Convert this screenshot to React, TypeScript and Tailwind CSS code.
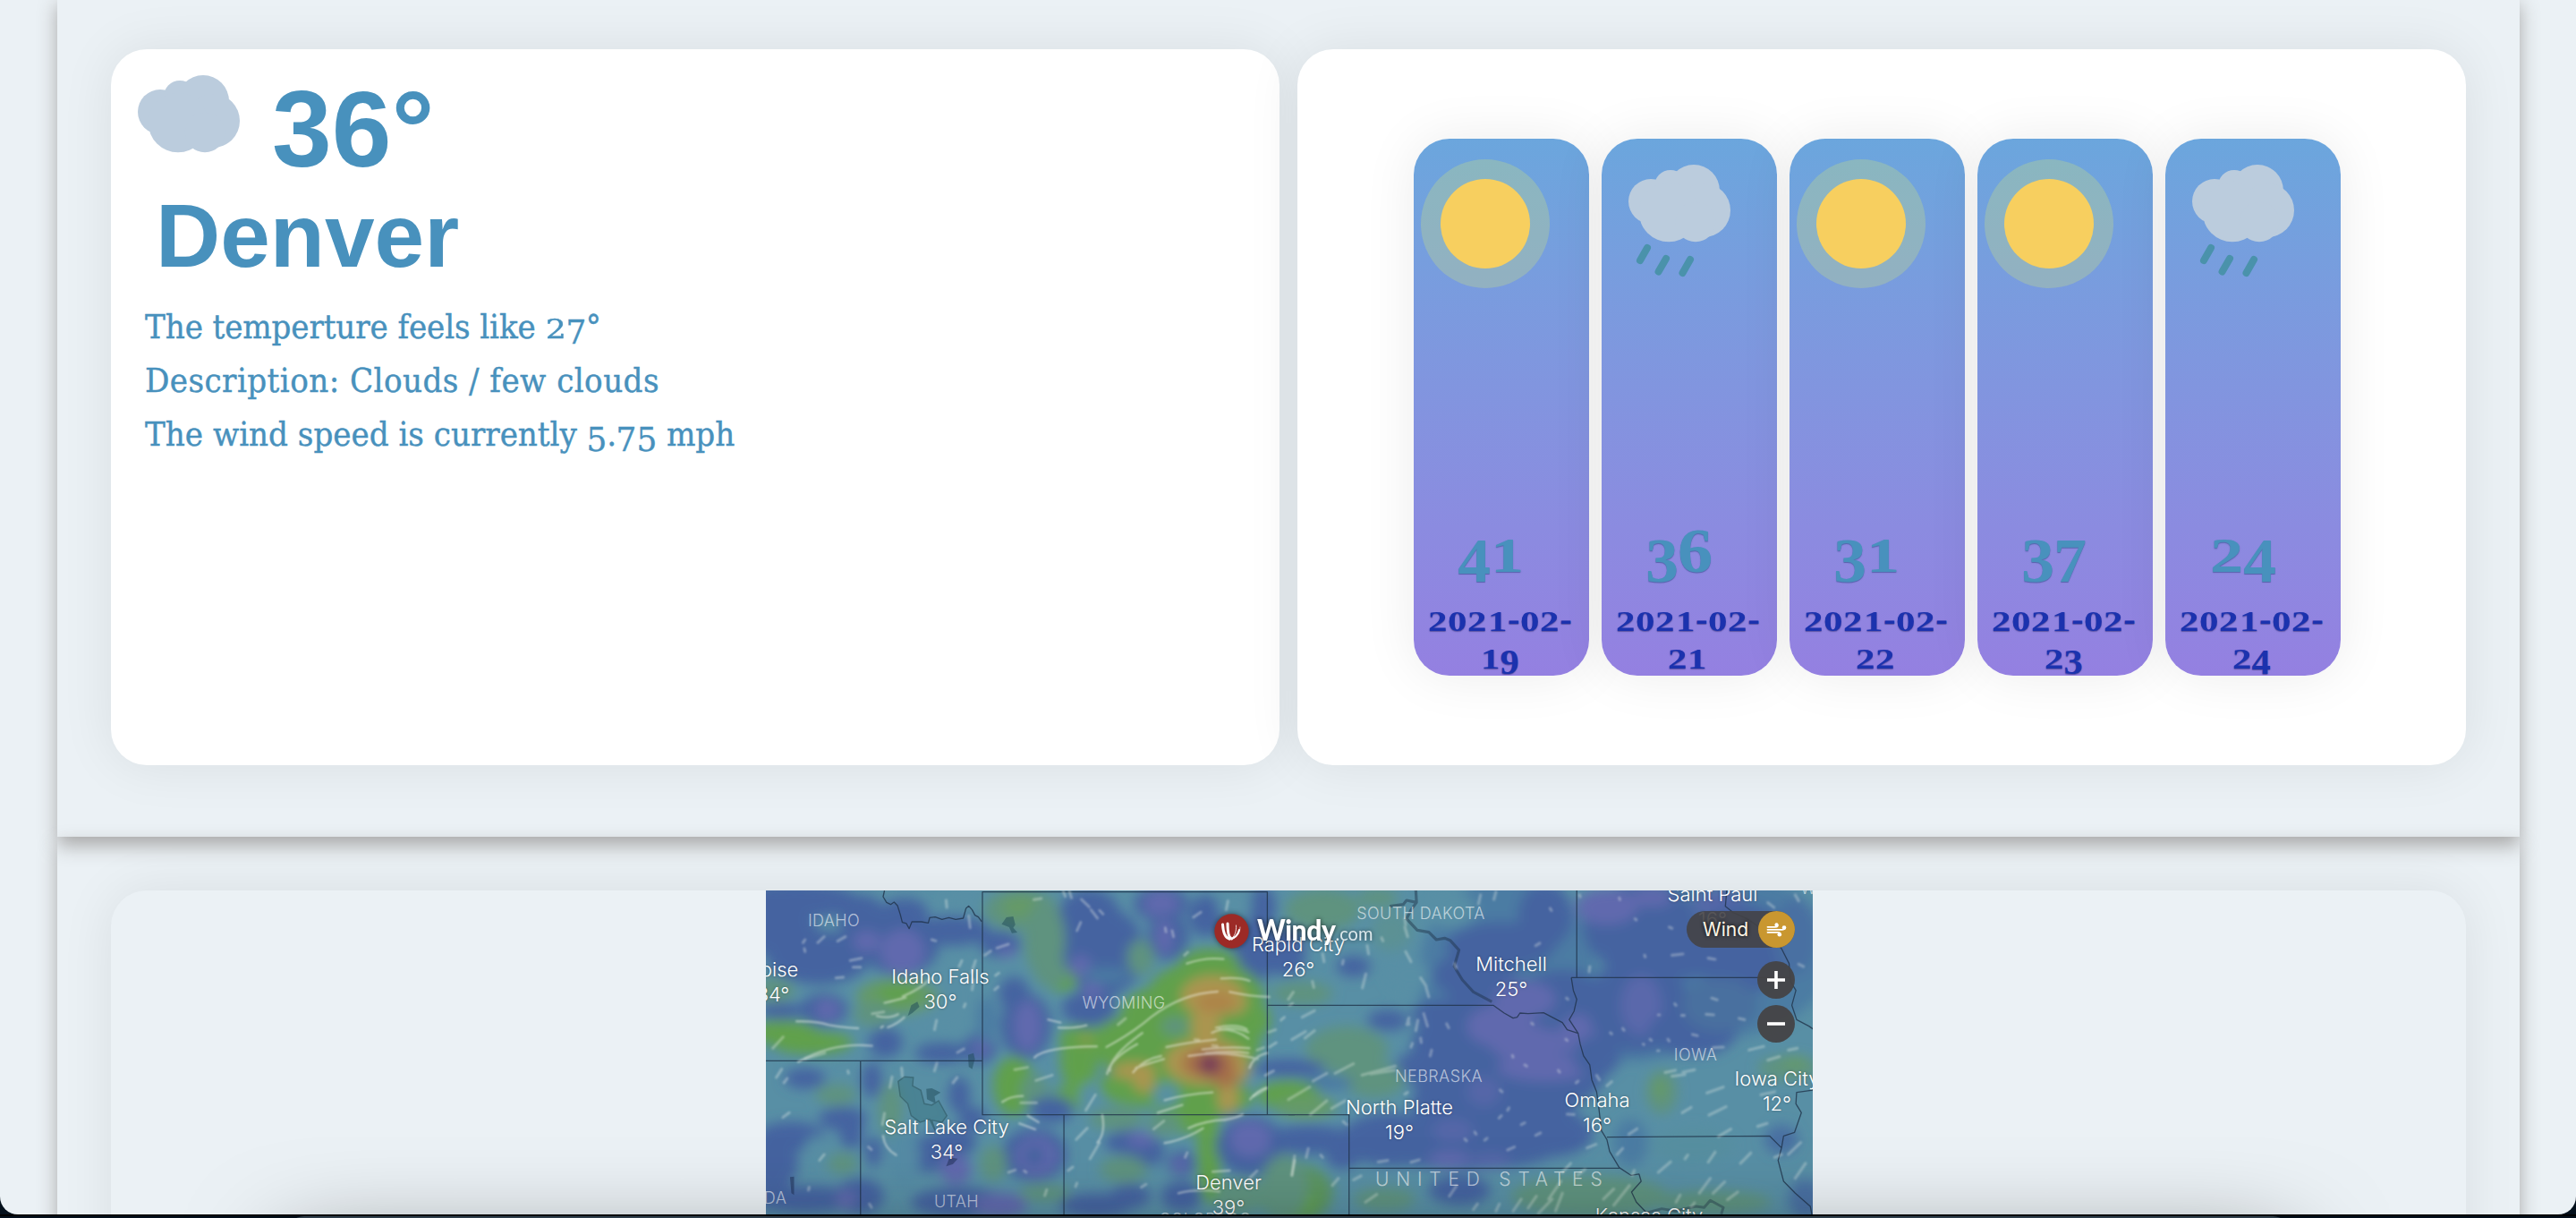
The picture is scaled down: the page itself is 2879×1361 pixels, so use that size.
import React from "react";

type Blob = [number, number, number, number, string];
type Streak = [number, number, number, number];

const TEAL = "#588fa5";
const BLUE = "#4563a0";
const PURP = "#6069ae";
const OLIVE = "#5f937f";
const GREEN = "#60a04c";
const ORANGE = "#ab9550";
const RUST = "#a6704a";
const PLUM = "#783d57";
const MIST = "#4c7ba3";

const westBlobs: Blob[] = [
  [100, 80, 190, 60, BLUE], [60, 190, 110, 80, BLUE], [170, 270, 150, 90, BLUE], [300, 150, 70, 90, BLUE],
  [420, 120, 70, 50, BLUE], [410, 240, 110, 90, BLUE], [560, 180, 110, 50, BLUE], [415, 250, 65, 75, PURP],
  [310, 215, 40, 35, PURP], [600, 80, 60, 30, TEAL], [40, 380, 60, 40, OLIVE], [60, 450, 70, 28, BLUE],
  [185, 445, 70, 55, BLUE], [195, 445, 35, 35, PURP], [365, 555, 50, 50, BLUE], [530, 590, 80, 35, BLUE],
  [640, 575, 50, 50, BLUE], [645, 572, 25, 25, PURP], [540, 400, 90, 120, TEAL],
  [700, 225, 60, 45, BLUE], [720, 250, 25, 20, PURP], [740, 390, 45, 55, BLUE], [775, 500, 75, 110, BLUE],
  [780, 500, 40, 85, PURP], [660, 480, 30, 80, MIST], [960, 130, 90, 90, BLUE], [1000, 250, 120, 150, BLUE],
  [960, 440, 80, 60, BLUE], [935, 300, 30, 40, PURP], [970, 380, 30, 30, PURP], [1010, 330, 70, 30, "#4a78a2"],
  [1170, 90, 80, 60, BLUE], [1170, 90, 50, 45, PURP], [1190, 200, 60, 80, BLUE], [1180, 200, 25, 60, PURP],
  [1300, 130, 50, 70, BLUE], [1440, 250, 60, 110, BLUE], [1465, 100, 40, 70, BLUE], [1385, 90, 50, 60, TEAL],
  [1520, 250, 50, 80, BLUE],
  [760, 110, 110, 70, OLIVE], [760, 100, 60, 40, "#659a68"], [830, 210, 60, 130, OLIVE], [880, 350, 45, 35, GREEN],
  [850, 320, 50, 50, OLIVE], [1110, 270, 40, 60, OLIVE], [400, 400, 120, 60, "#659a68"], [400, 390, 60, 30, GREEN],
  [330, 460, 60, 40, OLIVE], [60, 520, 110, 40, GREEN], [150, 555, 120, 40, GREEN],
  [740, 700, 60, 100, GREEN], [800, 720, 40, 60, OLIVE], [930, 610, 55, 110, GREEN], [940, 540, 70, 40, GREEN],
  [1060, 560, 90, 90, GREEN], [1160, 460, 110, 90, GREEN], [1300, 400, 170, 120, GREEN], [1310, 290, 90, 50, GREEN],
  [1280, 560, 180, 140, GREEN], [1420, 480, 70, 70, GREEN], [1120, 700, 130, 70, GREEN], [1290, 740, 150, 60, GREEN],
  [1240, 810, 100, 50, GREEN], [1310, 930, 35, 170, GREEN], [1040, 810, 80, 40, OLIVE], [910, 740, 60, 40, GREEN],
  [1210, 500, 40, 30, OLIVE], [1185, 730, 38, 40, TEAL], [960, 740, 30, 50, TEAL],
  [1320, 400, 92, 70, ORANGE], [1380, 420, 40, 40, ORANGE], [1300, 500, 42, 60, ORANGE], [1300, 620, 120, 78, ORANGE],
  [1380, 650, 48, 44, ORANGE], [1365, 740, 30, 55, ORANGE], [1090, 650, 65, 28, ORANGE], [1120, 690, 30, 32, ORANGE],
  [1330, 420, 60, 35, "#ad8448"], [1310, 625, 80, 50, RUST], [1355, 670, 40, 35, RUST], [1312, 628, 34, 36, PLUM],
  [950, 545, 20, 8, ORANGE],
  [130, 675, 60, 35, BLUE], [325, 680, 30, 60, BLUE], [90, 870, 100, 50, BLUE], [30, 960, 80, 90, BLUE],
  [240, 810, 70, 40, BLUE], [265, 860, 35, 50, BLUE], [130, 1080, 160, 45, BLUE], [290, 1070, 70, 60, BLUE],
  [330, 920, 25, 50, BLUE], [480, 930, 100, 60, BLUE], [560, 890, 70, 50, BLUE], [570, 980, 45, 50, PURP],
  [580, 1090, 140, 50, BLUE], [700, 1100, 80, 40, PURP], [580, 730, 32, 60, BLUE], [620, 810, 40, 40, BLUE],
  [800, 930, 95, 90, BLUE], [805, 935, 60, 65, PURP], [800, 935, 30, 35, BLUE], [850, 780, 65, 45, BLUE],
  [1080, 890, 75, 42, BLUE], [1130, 920, 50, 50, BLUE], [1110, 880, 40, 25, PURP], [1230, 960, 42, 42, BLUE],
  [1225, 965, 22, 25, PURP], [1430, 900, 100, 100, BLUE], [1430, 880, 60, 60, PURP], [980, 1100, 110, 40, BLUE],
  [1080, 1070, 60, 40, BLUE], [1230, 1070, 60, 50, BLUE], [250, 1080, 30, 30, PURP],
  [380, 780, 35, 90, OLIVE], [420, 940, 45, 110, "#558ba5"], [240, 960, 45, 35, OLIVE], [220, 730, 60, 35, OLIVE],
  [680, 960, 40, 60, OLIVE], [830, 1060, 75, 30, OLIVE], [1060, 980, 70, 45, OLIVE], [1180, 830, 50, 40, OLIVE],
  [1400, 1070, 70, 60, OLIVE], [1530, 1040, 70, 110, OLIVE], [170, 900, 40, 30, TEAL],
];

const eastBlobs: Blob[] = [
  [640, 330, 260, 330, MIST], [1250, 260, 340, 280, MIST], [1000, 500, 200, 120, MIST],
  [100, 110, 110, 70, OLIVE], [260, 70, 60, 30, OLIVE], [40, 390, 90, 40, OLIVE], [300, 180, 60, 70, "#5b9194"],
  [190, 300, 50, 35, BLUE], [10, 250, 40, 80, BLUE], [350, 330, 60, 60, TEAL], [470, 110, 80, 60, TEAL],
  [750, 130, 80, 110, BLUE], [620, 230, 160, 80, BLUE], [540, 330, 120, 80, BLUE], [800, 400, 120, 90, BLUE],
  [650, 420, 190, 80, BLUE], [590, 560, 230, 140, BLUE], [600, 760, 240, 160, BLUE], [520, 920, 260, 60, BLUE],
  [300, 880, 150, 90, BLUE], [780, 640, 150, 130, BLUE], [760, 860, 130, 80, BLUE], [400, 640, 90, 60, BLUE],
  [290, 480, 60, 35, BLUE], [440, 460, 80, 50, BLUE],
  [690, 410, 90, 60, PURP], [620, 500, 100, 70, PURP], [700, 560, 110, 60, PURP], [750, 640, 140, 45, PURP],
  [850, 530, 60, 70, PURP], [570, 720, 50, 50, "#5566a8"], [480, 850, 60, 40, "#5566a8"], [470, 945, 60, 25, PURP],
  [590, 950, 60, 25, "#5566a8"],
  [1030, 170, 170, 150, BLUE], [930, 100, 90, 60, PURP], [1060, 70, 60, 30, PURP], [1260, 90, 80, 45, "#5566a8"],
  [1160, 250, 120, 90, BLUE], [1330, 240, 150, 150, BLUE], [1020, 430, 150, 160, BLUE], [1030, 430, 60, 100, "#5a67ab"],
  [1180, 520, 130, 80, BLUE], [1260, 430, 110, 90, "#49709f"], [1480, 200, 60, 130, "#4a6fa2"], [900, 600, 70, 70, BLUE],
  [1090, 720, 45, 75, OLIVE], [1085, 710, 22, 35, "#659a68"], [1460, 640, 90, 40, OLIVE], [1480, 620, 40, 20, "#659a68"],
  [880, 1070, 230, 70, OLIVE], [1240, 1090, 170, 40, OLIVE], [1180, 900, 120, 60, "#578fa0"], [1440, 880, 50, 50, "#4a70a2"],
  [1510, 1080, 50, 70, "#4a70a2"], [1000, 890, 50, 80, MIST], [500, 1050, 90, 50, BLUE],
  [170, 580, 120, 80, OLIVE], [250, 680, 90, 60, OLIVE], [0, 640, 110, 30, BLUE], [110, 690, 80, 22, "#4a77a2"],
  [0, 730, 90, 50, GREEN], [50, 770, 90, 40, "#659a68"], [60, 880, 130, 50, BLUE], [160, 940, 50, 40, BLUE],
  [20, 1060, 110, 100, "#5c9560"], [20, 1090, 60, 50, GREEN], [280, 1080, 90, 40, OLIVE], [240, 1000, 60, 30, TEAL],
];

const westStreaks: Streak[] = [
  [130, 210, 124, 220], [167, 220, 186, 200], [225, 215, 248, 200], [128, 240, 130, 250], [262, 280, 295, 272],
  [270, 302, 292, 302], [220, 338, 242, 336], [542, 78, 544, 102], [608, 130, 612, 170], [500, 210, 512, 214],
  [580, 300, 588, 280], [616, 320, 628, 280], [655, 262, 672, 248], [690, 238, 724, 225], [798, 76, 820, 72],
  [890, 65, 884, 48], [908, 70, 902, 48], [937, 75, 960, 100], [965, 110, 984, 138], [990, 112, 1000, 124],
  [924, 180, 935, 152], [1182, 170, 1184, 184], [1202, 180, 1206, 200], [1264, 135, 1286, 118], [1365, 80, 1360, 110],
  [1238, 262, 1248, 252], [326, 458, 360, 452], [686, 330, 696, 322], [684, 378, 694, 368], [622, 345, 618, 378],
  [598, 425, 594, 436], [36, 574, 66, 536], [508, 512, 514, 480], [575, 588, 594, 576], [46, 672, 62, 644],
  [68, 690, 78, 675], [130, 610, 188, 590], [412, 640, 414, 668], [384, 670, 378, 706], [515, 624, 508, 650],
  [562, 690, 574, 672], [742, 646, 780, 638], [804, 682, 852, 664], [760, 757, 806, 757], [65, 806, 84, 790],
  [356, 830, 362, 792], [172, 950, 186, 930], [315, 905, 324, 914], [318, 1096, 324, 1108], [922, 880, 954, 842],
  [950, 782, 978, 730], [962, 945, 990, 890], [898, 984, 912, 972], [1044, 495, 1066, 474], [1148, 845, 1178, 818],
  [920, 1038, 924, 1026], [830, 1068, 836, 1048], [140, 1050, 142, 1040], [1112, 1040, 1126, 1030],
  [1240, 940, 1246, 924], [1552, 1000, 1560, 950], [1428, 1010, 1450, 985], [1484, 520, 1504, 512], [1486, 570, 1506, 555],
  [1520, 480, 1530, 470], [1474, 665, 1498, 650], [1440, 735, 1476, 710], [1268, 545, 1280, 546], [1320, 565, 1334, 566],
  [1450, 580, 1470, 572], [1545, 430, 1554, 424], [770, 985, 776, 990], [724, 990, 744, 982], [255, 650, 257, 658],
];

const westArcs: string[] = [
  "M362 422 Q400 412 424 404", "M340 466 Q380 476 402 460", "M372 504 Q400 492 420 470", "M415 400 Q470 375 495 340",
  "M105 484 Q160 482 200 496 Q250 506 285 507", "M110 620 Q200 560 300 564 L326 566", "M352 505 L358 500",
  "M1245 290 Q1300 268 1352 275", "M1010 570 Q1090 520 1140 470 Q1230 390 1335 384", "M1345 340 Q1400 335 1428 348",
  "M1370 385 Q1430 400 1486 402", "M1020 650 Q1020 600 1115 523", "M1012 660 Q1020 610 1100 560",
  "M1088 655 Q1120 610 1170 600", "M1096 640 Q1140 622 1178 610", "M1185 570 Q1260 552 1330 545",
  "M1318 522 Q1370 495 1425 520", "M1340 510 Q1390 510 1425 542", "M1330 505 Q1390 490 1420 510", "M1290 578 Q1370 568 1428 574",
  "M1250 600 Q1350 580 1452 610", "M1300 590 Q1370 582 1425 590", "M800 605 Q830 570 982 568", "M840 478 L876 488",
  "M870 505 Q920 508 952 497", "M706 754 Q730 734 766 734", "M358 868 Q362 910 396 932", "M780 800 L812 822",
  "M756 826 L802 846", "M1180 748 Q1240 728 1320 722", "M1160 790 L1232 764", "M1250 842 Q1300 816 1356 814",
  "M1180 892 Q1240 880 1292 842", "M1356 814 Q1390 808 1408 796", "M984 890 Q1008 860 998 798", "M1320 988 L1370 984",
  "M1220 1060 Q1270 1045 1340 1054", "M1430 745 Q1450 715 1478 706", "M1428 640 Q1440 600 1480 590",
];

const eastStreaks: Streak[] = [
  [555, 90, 561, 60], [600, 75, 606, 50], [340, 168, 348, 200], [342, 250, 358, 284], [386, 338, 402, 366],
  [402, 370, 410, 402], [216, 372, 226, 325], [100, 258, 104, 284], [160, 280, 158, 292], [230, 230, 234, 258],
  [272, 204, 276, 214], [70, 350, 74, 370], [340, 140, 342, 160], [485, 290, 490, 305], [722, 230, 734, 222],
  [764, 105, 768, 112], [966, 70, 968, 76], [878, 318, 880, 300], [1120, 262, 1152, 258], [1226, 272, 1246, 276],
  [1400, 86, 1418, 102], [1452, 150, 1470, 162], [1480, 60, 1490, 80], [1490, 292, 1504, 300], [1236, 406, 1252, 412],
  [1128, 425, 1132, 430], [1148, 464, 1156, 464], [1220, 460, 1242, 462], [1316, 474, 1332, 478], [1180, 528, 1194, 532],
  [1240, 572, 1270, 570], [1345, 580, 1388, 568], [1400, 614, 1434, 602], [1460, 580, 1486, 574], [1100, 655, 1130, 648],
  [1120, 668, 1158, 662], [1152, 654, 1186, 646], [1222, 724, 1270, 704], [1228, 798, 1278, 770], [1150, 790, 1176, 772],
  [1370, 836, 1398, 826], [1380, 730, 1420, 720], [994, 862, 1018, 844], [1256, 870, 1292, 845], [1080, 990, 1116, 955],
  [1158, 945, 1166, 932], [1226, 956, 1246, 922], [1200, 1060, 1232, 1010], [1240, 1060, 1274, 1022], [1282, 1082, 1312, 1056],
  [1132, 1090, 1144, 1066], [1176, 1106, 1186, 1092], [1320, 960, 1350, 925], [1460, 930, 1496, 890], [1480, 1010, 1510, 960],
  [346, 495, 352, 472], [372, 515, 378, 480], [395, 458, 406, 500], [350, 478, 352, 494], [358, 570, 362, 558],
  [386, 540, 388, 555], [414, 600, 418, 580], [462, 492, 468, 506], [10, 545, 50, 518], [48, 540, 76, 515],
  [40, 470, 76, 448], [136, 658, 190, 626], [215, 664, 312, 634], [240, 660, 310, 648], [72, 684, 112, 658],
  [64, 796, 112, 750], [0, 746, 62, 704], [126, 776, 166, 750], [94, 932, 100, 940], [52, 940, 58, 910],
  [10, 1000, 18, 935], [128, 1034, 146, 1010], [340, 728, 348, 722], [160, 820, 170, 830], [262, 955, 290, 950],
  [358, 956, 382, 948], [190, 1015, 212, 1002], [225, 1090, 258, 1064], [544, 855, 548, 862], [573, 882, 580, 876],
  [515, 878, 520, 884], [615, 808, 622, 800], [640, 782, 644, 774], [680, 830, 690, 824], [722, 866, 736, 858],
  [640, 915, 660, 905], [690, 630, 696, 634], [618, 714, 624, 720], [654, 598, 656, 604], [788, 648, 792, 654],
  [710, 490, 714, 494], [840, 690, 846, 684], [900, 665, 908, 680], [930, 700, 944, 686], [814, 795, 834, 796],
  [872, 908, 898, 896], [800, 990, 824, 960], [845, 1000, 866, 980], [760, 1080, 796, 1020], [700, 1110, 724, 1070],
  [656, 1120, 680, 1080], [730, 1128, 770, 1080], [780, 1120, 800, 1060], [540, 1115, 552, 1096], [606, 1120, 616, 1096],
  [470, 1070, 490, 1036], [950, 1100, 996, 1034], [920, 1080, 950, 1046], [1004, 1000, 1010, 984], [960, 930, 976, 910],
  [850, 60, 852, 66], [1012, 140, 1016, 144], [1040, 262, 1042, 268], [1112, 168, 1120, 172], [976, 508, 980, 514],
  [940, 522, 944, 526], [1056, 544, 1060, 548], [1080, 462, 1084, 462], [1108, 544, 1112, 550], [1078, 582, 1082, 582],
  [1036, 560, 1038, 562], [812, 406, 816, 410], [810, 544, 814, 548], [1420, 940, 1440, 930], [0, 410, 14, 386],
];

const cityLabels: [string, string, number, number][] = [
  ["Boise", "34°", 8, 96], ["Idaho Falls", "30°", 195, 104], ["Salt Lake City", "34°", 202, 272],
  ["Denver", "39°", 517, 334], ["Rapid City", "26°", 595, 68], ["Mitchell", "25°", 833, 90],
  ["North Platte", "19°", 708, 250], ["Omaha", "16°", 929, 242], ["Iowa City", "12°", 1130, 218],
  ["Saint Paul", "16°", 1058, 12], ["Kansas City", "", 987, 371],
];

const stateLabels: [string, number, number][] = [
  ["IDAHO", 76, 40], ["WYOMING", 400, 132], ["UTAH", 213, 354], ["NEVADA", -14, 350],
  ["SOUTH DAKOTA", 732, 32], ["NEBRASKA", 752, 214], ["IOWA", 1039, 190], ["COLORADO", 491, 374],
  ["WISCONSIN", 1210, 4],
];

const BlobLayer = ({ items }: { items: Blob[] }) => (
  <>
    {items.map(([x, y, rx, ry, c], i) => (
      <ellipse key={i} cx={x} cy={y} rx={rx} ry={ry} fill={c} />
    ))}
  </>
);

const StreakLayer = ({ items }: { items: Streak[] }) => (
  <>
    {items.map(([a, b, c, d], i) => (
      <line key={i} x1={a} y1={b} x2={c} y2={d} vectorEffect="non-scaling-stroke" />
    ))}
  </>
);

const WEST = "translate(-6 -15) scale(.3827 .3333)";
const EAST = "translate(584 -15) scale(.3827 .3333)";

function WindField() {
  return (
    <svg viewBox="0 0 1170 362" width="1170" height="362" className="block">
      <defs>
        <filter id="soft" x="-5%" y="-5%" width="110%" height="110%">
          <feGaussianBlur stdDeviation="7" />
        </filter>
        <filter id="haze" x="-5%" y="-5%" width="110%" height="110%">
          <feGaussianBlur stdDeviation="0.9" />
        </filter>
      </defs>
      <rect width="1170" height="362" fill={TEAL} />
      <g filter="url(#soft)">
        <g transform={EAST}><BlobLayer items={eastBlobs} /></g>
        <g transform={WEST}><BlobLayer items={westBlobs} /></g>
      </g>
      <g fill="#1f4a58" opacity=".5">
        <g transform={WEST}>
          <path vectorEffect="non-scaling-stroke" stroke="#234a50" strokeWidth="1.5" d="M402 685 L420 670 L446 672 L444 700 L468 715 L478 760 L500 765 L520 750 L544 800 L530 822 L500 815 L510 850 L494 812 L466 822 L440 800 L430 760 L408 735Z" fill="#3d7884" />
          <path d="M484 710 L500 708 L526 722 L508 735 L512 760 L486 745Z" />
          <path d="M704 158 L718 135 L738 132 L744 160 L738 170 L750 186 L734 188 L726 168Z" />
          <path d="M430 466 L440 430 L458 418 L464 435 L444 455Z" />
          <path d="M606 596 L622 590 L626 610 L618 644 L608 636Z" />
          <path d="M86 1006 L98 1004 L98 1066 L90 1060Z" fill="#1d2c52" />
          <path d="M542 970 L552 940 L576 944 L562 962Z" fill="#1d2c52" />
        </g>
      </g>
      <g fill="none" stroke="#1d2f45" strokeWidth="1.3" opacity=".75" strokeLinejoin="round">
        <g transform={WEST}>
          <path vectorEffect="non-scaling-stroke" d="M648 50 L1480 50 L1480 797 L648 797Z M1480 430 L1560 430 M0 616 L648 616 M292 616 V1140 M886 797 V1140 M1480 797 L1560 797" />
          <path vectorEffect="non-scaling-stroke" d="M362 45 L358 66 L368 85 L380 92 L390 84 L400 96 L408 125 L414 152 L426 156 L434 173 L442 150 L470 150 L490 154 L494 136 L510 134 L530 142 L550 136 L570 142 L592 138 L600 105 L608 97 L618 110 L626 128 L636 134 L646 150" />
        </g>
        <g transform={EAST}>
          <path vectorEffect="non-scaling-stroke" d="M0 430 L598 430 L630 456 L656 473 L668 470 L676 456 L700 458 L745 455 L770 470 L800 488 L814 512 L846 524 L852 560 L862 600 L880 630 L886 680 L900 720 L906 770 L914 850 L930 880 L938 920 L966 974 L1000 1000 L1024 996 L1030 1020 L1002 1056 L1016 1090 L1046 1126" />
          <path vectorEffect="non-scaling-stroke" d="M0 797 H177 V1140 M177 976 H968 M842 45 V336 M826 337 H1462 M826 337 L832 380 L842 410 L834 450 L820 478 L846 524 M930 872 L1405 868 L1440 908 M1280 45 L1276 98 L1300 120 L1340 140 L1390 180 L1440 240 L1462 290 L1466 350 L1482 380 L1470 430 L1484 478 L1520 500 L1535 512 M1535 714 L1484 722 L1482 760 L1498 790 L1478 856 L1446 868 L1440 908 L1430 950 L1446 1020 L1480 1060 L1524 1104 L1530 1140" />
          <path vectorEffect="non-scaling-stroke" strokeWidth="3.2" opacity=".6" d="M372 45 L374 85 L345 78 L335 92 L296 98 M374 85 L358 110 L345 140 L376 178 L410 185 L432 210 L456 205 L472 212 L498 245 L484 300 L508 345 L540 385 L594 418" />
          <path vectorEffect="non-scaling-stroke" strokeWidth="3" opacity=".5" d="M1046 1126 L1090 1112 L1130 1120 L1190 1104 L1214 1108 L1232 1084 L1270 1108 L1264 1130" />
        </g>
      </g>
      <g fill="none" stroke="#f2f5ec" strokeLinecap="round" filter="url(#haze)">
        <g transform={WEST}>
          <g strokeWidth="3" opacity=".33"><StreakLayer items={westStreaks} /></g>
          <g strokeWidth="2.4" opacity=".46">
            {westArcs.map((d) => <path key={d} d={d} vectorEffect="non-scaling-stroke" />)}
          </g>
        </g>
        <g transform={EAST} strokeWidth="3.2" opacity=".3"><StreakLayer items={eastStreaks} /></g>
      </g>
    </svg>
  );
}

function WindyLogo() {
  return (
    <div className="absolute left-[501px] top-[23px] flex items-center">
      <svg width="39" height="39" viewBox="0 0 39 39" className="drop-shadow-[0_0_3px_rgba(0,0,0,0.5)]">
        <circle cx="19.5" cy="19.5" r="19.2" fill="#9c2a26" />
        <g fill="none" stroke="#fff" strokeLinecap="round">
          <path d="M9.5 12 C10 20 12 27 17 28" strokeWidth="3" />
          <path d="M15 11 C15 20 16 27 19.5 28" strokeWidth="3" />
          <path d="M17 28.5 C23 28 27 23 28 18" strokeWidth="2" />
          <path d="M18 28.5 C23 26 25 20 24.5 13" strokeWidth="1" opacity=".8" />
          <path d="M19 28.5 C26 27 29 21 29 15" strokeWidth="1" opacity=".6" />
        </g>
      </svg>
      <div className="ml-[9px] flex origin-left scale-y-[1.1] items-baseline whitespace-nowrap font-['Lato'] leading-[40px] text-white [text-shadow:0_0_5px_rgba(0,0,0,0.7)]">
        <span className="text-[30px] font-black tracking-[-0.4px]">Windy</span>
        <span className="text-[20px] opacity-80">.com</span>
      </div>
    </div>
  );
}

function MapControls() {
  return (
    <div className="absolute left-[1029px] top-[23px] flex w-[121px] flex-col items-end">
      <div className="flex h-[41px] w-full items-center justify-between rounded-full bg-[#444346]/90 pl-[18px]">
        <span className="font-['Inter'] text-[21px] text-[#fdf6e6] [text-shadow:0_0_4px_#000]">Wind</span>
        <svg width="41" height="41" viewBox="0 0 41 41" className="rounded-full bg-[#c99730]">
          <g fill="none" stroke="#fff" strokeWidth="1.8" strokeLinecap="round">
            <path d="M10.5 17.8 H19 C22 17.8 22.5 16 21 14.8" />
            <path d="M10.5 20.8 H27 C29.5 20.8 30.5 19.5 29.5 18" />
            <path d="M10.5 23.8 H22 C24.5 23.8 25 25 24 26.2" />
          </g>
          <g fill="#fff">
            <circle cx="20.5" cy="15.4" r="2.1" /><circle cx="29" cy="18.6" r="2.3" /><circle cx="23.8" cy="26.3" r="2.3" />
          </g>
        </svg>
      </div>
      <button className="mt-[15px] flex size-[42px] items-center justify-center rounded-full bg-[#444346]/95">
        <svg width="20" height="20" viewBox="0 0 20 20"><path d="M0 10 H20 M10 0 V20" stroke="#fff" strokeWidth="3.6" /></svg>
      </button>
      <button className="mt-[7px] flex size-[42px] items-center justify-center rounded-full bg-[#444346]/95">
        <svg width="20" height="20" viewBox="0 0 20 20"><path d="M0 10 H20" stroke="#fff" strokeWidth="3.6" /></svg>
      </button>
    </div>
  );
}

function WindMap() {
  return (
    <div className="relative ml-[732px] h-[400px] w-[1170px] overflow-hidden bg-[#435f9f]">
      <WindField />
      {stateLabels.map(([name, x, y]) => (
        <span
          key={name}
          className="absolute -translate-x-1/2 whitespace-nowrap font-['Inter'] text-[18px] leading-[24px] font-light tracking-[0.4px] text-white/60"
          style={{ left: x, top: y - 18.5 }}
        >
          {name}
        </span>
      ))}
      <span className="absolute left-[681px] top-[309px] whitespace-nowrap font-['Inter'] text-[21px] leading-[28px] font-light tracking-[7.8px] text-white/60">
        UNITED STATES
      </span>
      {cityLabels.map(([name, temp, x, y]) => (
        <div
          key={name}
          className="absolute -translate-x-1/2 whitespace-nowrap text-center font-['Inter'] text-[22px] leading-[28px] font-light text-white [text-shadow:0_0_3px_rgba(0,0,0,0.35)]"
          style={{ left: x, top: y - 22 }}
        >
          <div>{name}</div>
          <div>{temp}</div>
        </div>
      ))}
      <WindyLogo />
      <MapControls />
    </div>
  );
}

const CloudShape = () => (
  <g fill="#bbccdd">
    <circle cx="25" cy="41" r="25" />
    <circle cx="47" cy="24" r="18" />
    <circle cx="73" cy="29" r="29" />
    <circle cx="84" cy="51" r="30" />
    <circle cx="45" cy="53" r="33.3" />
    <circle cx="75" cy="64" r="22.3" />
  </g>
);

const CloudIcon = () => (
  <svg width="114" height="87" viewBox="0 0 114 87"><CloudShape /></svg>
);

const RainIcon = () => (
  <svg width="114" height="126" viewBox="0 0 114 126">
    <CloudShape />
    <g stroke="#4a92ab" strokeWidth="8" strokeLinecap="round">
      <path d="M21 93 L13 107" /><path d="M42 105 L33.6 119.5" /><path d="M69 106 L60.5 121" />
    </g>
  </svg>
);

const SunIcon = () => (
  <svg width="144" height="144" viewBox="0 0 144 144">
    <circle cx="72" cy="72" r="72" fill="#cce27f" opacity=".3" />
    <circle cx="72" cy="72" r="50" fill="#f7cf5f" />
  </svg>
);

/* Old-style numerals: 0-2 sit at x-height, 3 4 5 7 9 hang below the baseline. */
function Numerals({ text }: { text: string }) {
  return (
    <>
      {text.split("").map((ch, i) => {
        if ("012".includes(ch))
          return <span key={i} className="mx-[0.11em] inline-block scale-x-[1.38] text-[0.77em] leading-none">{ch}</span>;
        if ("34579".includes(ch))
          return <span key={i} className="mx-[0.01em] inline-block translate-y-[0.16em] scale-x-[1.05] leading-none">{ch}</span>;
        if (ch === "6")
          return <span key={i} className="mx-[0.03em] inline-block scale-x-[1.12] leading-none">{ch}</span>;
        return <span key={i}>{ch}</span>;
      })}
    </>
  );
}

const days = [
  { temp: "41", icon: "sun", day: "19" },
  { temp: "36", icon: "rain", day: "21" },
  { temp: "31", icon: "sun", day: "22" },
  { temp: "37", icon: "sun", day: "23" },
  { temp: "24", icon: "rain", day: "24" },
];

function DayCard({ temp, icon, day }: { temp: string; icon: string; day: string }) {
  return (
    <div className="flex h-[600px] w-[196px] flex-col rounded-[40px] bg-linear-to-b from-[#6ba6dd] to-[#9480e1] font-['Liberation_Serif',serif] font-bold shadow-[0_0_60px_rgba(0,0,0,0.08)]">
      <div className="h-[423px]">
        {icon === "sun" ? (
          <div className="pl-[8px] pt-[23px]"><SunIcon /></div>
        ) : (
          <div className="pl-[30px] pt-[29px]"><RainIcon /></div>
        )}
      </div>
      <div className="h-[95px] pl-[49px] text-[70px] leading-[80px] text-[#4891bd] [text-shadow:0_1px_1px_rgba(30,60,120,0.5)]">
        <Numerals text={temp} />
      </div>
      <div className="text-center text-[40.5px] leading-[42px] text-[#1b32ae] [text-shadow:0_1px_1px_rgba(30,30,100,0.5)]">
        <div className="-ml-[4px]"><Numerals text="2021-02-" /></div>
        <div className="-ml-[4px]"><Numerals text={day} /></div>
      </div>
    </div>
  );
}

export default function App() {
  return (
    <div className="relative h-[1361px] w-[2879px] overflow-hidden bg-[#04101c]">
      <div className="relative h-[1357px] overflow-hidden rounded-b-[20px] bg-[#ebf1f5]">
        <main className="ml-[64px] w-[2752px]">
          <section className="-mt-[5px] flex h-[940px] gap-[20px] px-[60px] pt-[60px] shadow-[0_10px_20px_#a9a9a9]">
            <div className="h-[800px] w-[1306px] rounded-[40px] bg-white text-[#4891bd] shadow-[0_0_60px_rgba(0,0,0,0.08)]">
              <div className="flex h-[165px] pl-[30px] pt-[29px]">
                <CloudIcon />
                <div className="ml-[36px] font-['Liberation_Sans',sans-serif] text-[120px] leading-[120px] font-bold">36°</div>
              </div>
              <div className="pl-[50px] font-['Liberation_Sans',sans-serif] text-[100px] leading-[86px] font-bold">Denver</div>
              <div className="mt-[29px] pl-[38px] font-['DejaVu_Serif_Condensed','DejaVu_Serif',serif] text-[38px] leading-[60px] [-webkit-text-stroke:0.4px_#4891bd]">
                <div className="tracking-[-0.1px]">The temperture feels like <Numerals text="27" />°</div>
                <div className="tracking-[0.45px]">Description: Clouds / few clouds</div>
                <div>The wind speed is currently <Numerals text="5.75" /> mph</div>
              </div>
            </div>
            <div className="flex h-[800px] w-[1306px] gap-[14px] rounded-[40px] bg-white pl-[130px] pt-[100px] shadow-[0_0_60px_rgba(0,0,0,0.08)]">
              {days.map((d) => <DayCard key={d.day} {...d} />)}
            </div>
          </section>
          <section className="h-[900px] px-[60px] pt-[60px] shadow-[0_10px_20px_#a9a9a9]">
            <div className="h-[800px] rounded-[40px] shadow-[0_0_60px_rgba(0,0,0,0.08)]">
              <WindMap />
            </div>
          </section>
        </main>
      </div>
      <div className="absolute left-[320px] top-[1359px] h-[200px] w-[2240px] rounded-[20px] bg-[#2f3f4c] shadow-[0_40px_110px_rgba(0,0,0,0.5)]" />
      <div className="absolute left-0 top-[1357px] h-[2px] w-full bg-black" />
    </div>
  );
}
